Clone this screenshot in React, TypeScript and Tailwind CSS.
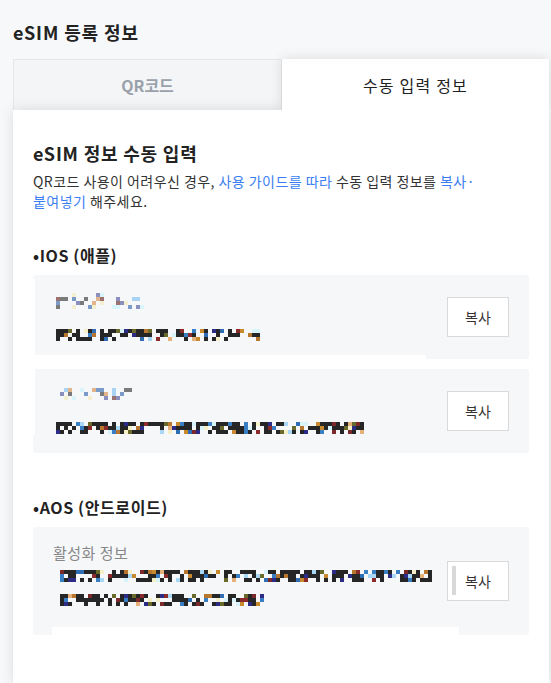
import React from "react";

const FONT = { fontFamily: '"Noto Sans CJK KR", "Noto Sans", sans-serif' };

function mulberry32(a: number) {
  return function () {
    a |= 0;
    a = (a + 0x6d2b79f5) | 0;
    let t = Math.imul(a ^ (a >>> 15), 1 | a);
    t = (t + Math.imul(t ^ (t >>> 7), 61 | t)) ^ t;
    return ((t ^ (t >>> 14)) >>> 0) / 4294967296;
  };
}

const PAL_DARK = [
  "#7a2a2a",
  "#b8772e",
  "#2c2c86",
  "#3a7fc4",
  "#a8d8f5",
  "#f6f0c8",
  "#e6b07a",
  "#d7f4fa",
  "#8b2a2a",
  "#6a6a2a",
  "#c98a2e",
  "#2f6eb5",
];
const PAL_LIGHT = ["#a9d3f5", "#e2b48a", "#7a7a7a", "#8a8fc0", "#f6efcf", "#d8f5fb", "#9b7070", "#7a9ac8"];

function Mosaic({ seed, cols, rows, light }: { seed: number; cols: number; rows: number; light?: boolean }) {
  const rnd = mulberry32(seed);
  const cells: string[] = [];
  for (let r = 0; r < rows; r++) {
    for (let c = 0; c < cols; c++) {
      let empty: number;
      if (light) empty = 0.62;
      else empty = r === 0 ? 0.22 : r === rows - 1 ? 0.5 : 0.28;
      if (c === 0 && !light) empty = 0;
      if (rnd() < empty) {
        cells.push("transparent");
      } else if (light) {
        cells.push(PAL_LIGHT[Math.floor(rnd() * PAL_LIGHT.length)]);
      } else if (rnd() < 0.55) {
        cells.push("#262626");
      } else {
        cells.push(PAL_DARK[Math.floor(rnd() * PAL_DARK.length)]);
      }
    }
  }
  return (
    <div className="flex flex-wrap" style={{ width: cols * 4, height: rows * 4 }}>
      {cells.map((c, i) => (
        <span key={i} className="block w-[4px] h-[4px]" style={{ backgroundColor: c }} />
      ))}
    </div>
  );
}

function CopyButton({ bar }: { bar?: boolean }) {
  return (
    <button className="relative w-[62px] h-[40px] bg-white border border-[#d9d9d9] text-[14px] text-[#333] flex items-center justify-center shrink-0">
      {bar && <span className="absolute left-[4px] top-[4px] w-[4px] h-[29px] bg-[#d9d9d9]" />}
      복사
    </button>
  );
}

export default function App() {
  return (
    <div className="min-h-screen bg-[#f7f8fa] text-[#222]" style={FONT}>
      <h1 className="h-[59px] pl-[13px] pt-[20px] text-[18px] leading-[24px] font-bold tracking-[0.9px] text-[#222]">
        eSIM 등록 정보
      </h1>
      <div className="ml-[13px] w-[536px]">
        <div className="flex h-[51px]">
          <div className="flex-1 bg-[#f4f5f7] border border-[#e6e7ea] border-b-0 flex items-center justify-center text-[16px] font-bold text-[#9aa1aa]">
            QR코드
          </div>
          <div className="flex-1 relative z-20 bg-white shadow-[0_0_12px_rgba(0,0,0,0.12)] [clip-path:inset(-20px_-20px_0_-20px)] flex items-center justify-center text-[16px] tracking-[1.2px] text-[#222]">
            수동 입력 정보
          </div>
        </div>
        <div className="relative z-10 bg-white shadow-[0_0_12px_rgba(0,0,0,0.12)] min-h-[573px] pt-[31px] px-[20px]">
          <h2 className="text-[18px] leading-[24px] font-bold tracking-[0.8px]">eSIM 정보 수동 입력</h2>
          <p className="mt-[6px] text-[14px] leading-[20px] tracking-[0.45px] text-[#333]">
            QR코드 사용이 어려우신 경우, <span className="text-[#3a7ef2]">사용 가이드를 따라</span> 수동 입력 정보를{" "}
            <span className="text-[#3a7ef2]">복사·</span>
            <br />
            <span className="text-[#3a7ef2]">붙여넣기</span> 해주세요.
          </p>

          <div className="mt-[33px] text-[16px] leading-[22px] font-bold tracking-[0.6px]">•IOS (애플)</div>

          <div className="relative mt-[9px] h-[84px] rounded-[3px] bg-[#f6f7f9] flex items-center justify-between pl-[23px] pr-[20px]">
            <span className="absolute left-0 top-[4px] w-[2px] h-[76px] bg-white" />
            <span className="absolute left-0 bottom-0 w-[393px] h-[4px] bg-white" />
            <div className="flex flex-col">
              <Mosaic seed={11} cols={22} rows={4} light />
              <div className="mt-[20px]">
                <Mosaic seed={23} cols={51} rows={3} />
              </div>
            </div>
            <CopyButton />
          </div>

          <div className="relative mt-[10px] h-[84px] rounded-[3px] bg-[#f6f7f9] flex items-center justify-between pl-[23px] pr-[20px]">
            <span className="absolute left-0 top-0 w-[2px] h-[66px] bg-white" />
            <div className="flex flex-col">
              <div className="pl-[4px]">
                <Mosaic seed={37} cols={18} rows={3} light />
              </div>
              <div className="mt-[22px]">
                <Mosaic seed={41} cols={77} rows={3} />
              </div>
            </div>
            <CopyButton />
          </div>

          <div className="mt-[43px] text-[16px] leading-[22px] font-bold tracking-[0.6px]">•AOS (안드로이드)</div>

          <div className="relative mt-[9px] h-[108px] rounded-[3px] bg-[#f6f7f9] flex items-center justify-between pl-[20px] pr-[20px]">
            <span className="absolute left-[19px] bottom-0 w-[407px] h-[8px] bg-white" />
            <div className="flex flex-col self-start pt-[16px]">
              <div className="text-[15px] leading-[20px] tracking-[0.5px] text-[#888]">활성화 정보</div>
              <div className="mt-[7px] pl-[7px]">
                <Mosaic seed={53} cols={93} rows={3} />
              </div>
              <div className="mt-[12px] pl-[7px]">
                <Mosaic seed={67} cols={51} rows={3} />
              </div>
            </div>
            <CopyButton bar />
          </div>
        </div>
      </div>
    </div>
  );
}
